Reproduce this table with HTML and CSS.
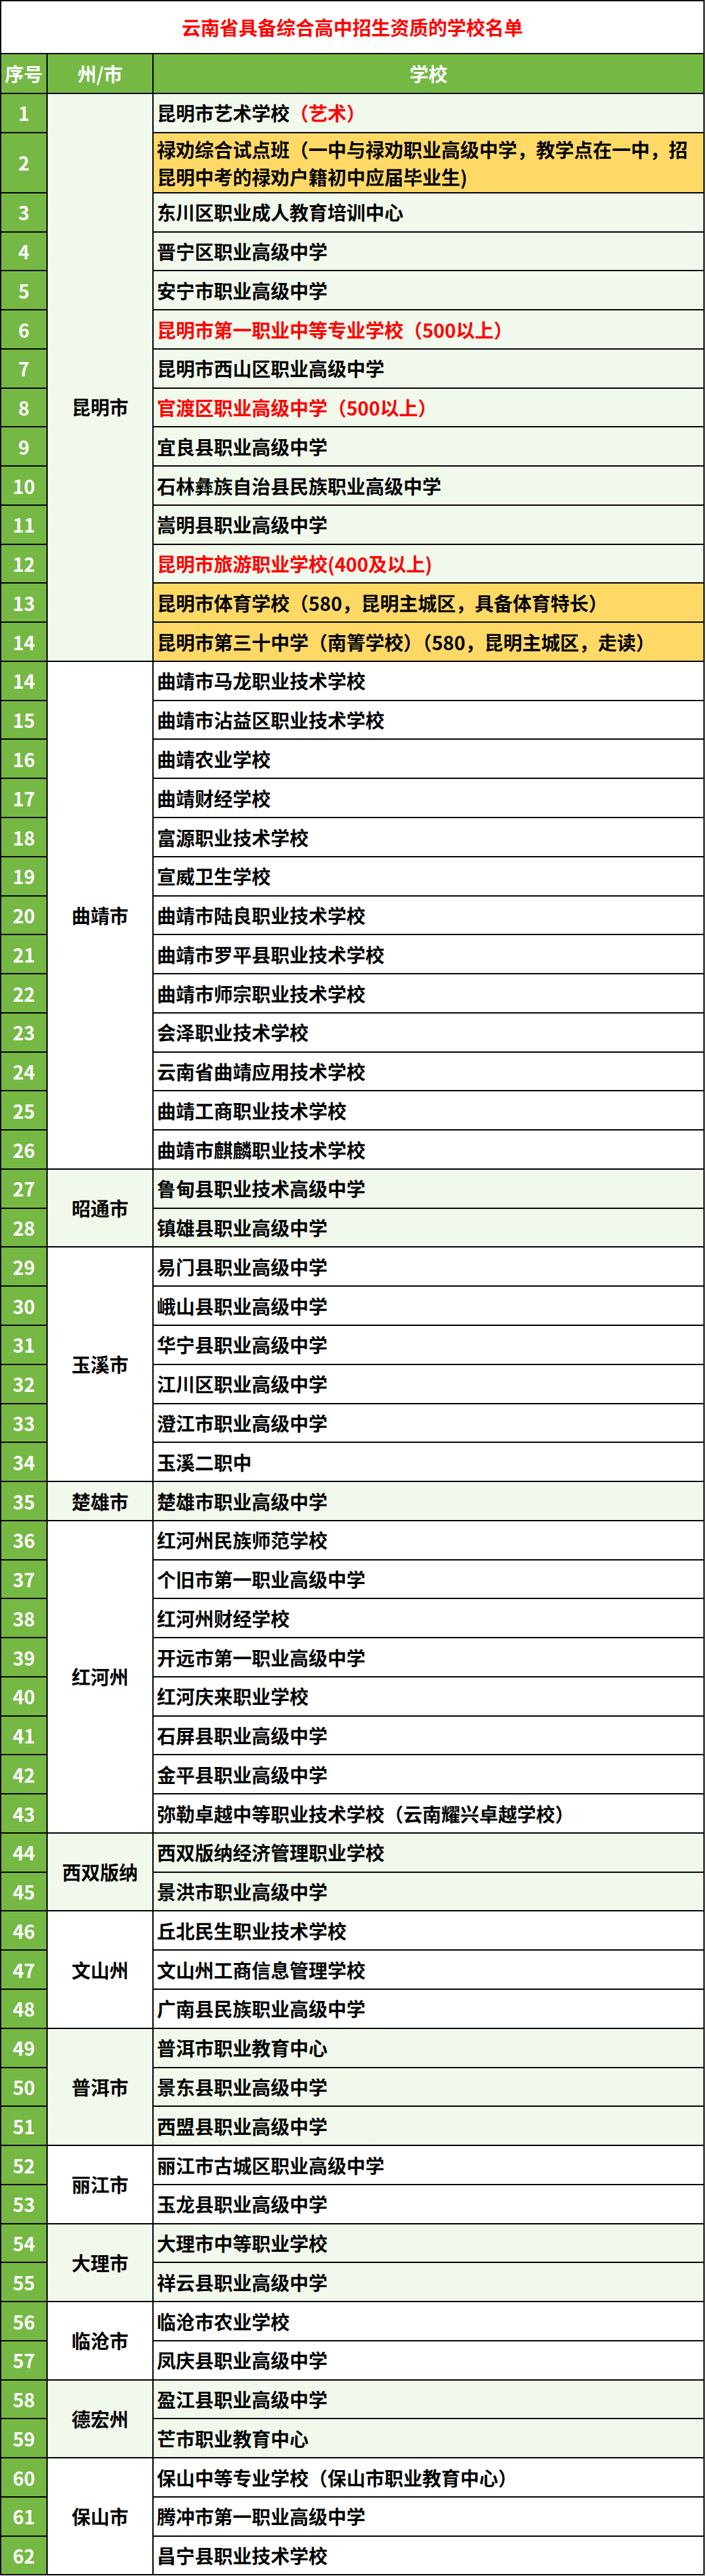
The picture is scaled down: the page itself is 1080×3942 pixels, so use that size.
FILE: index.html
```html
<!DOCTYPE html>
<html lang="zh-CN">
<head>
<meta charset="utf-8">
<title>云南省具备综合高中招生资质的学校名单</title>
<link rel="stylesheet" href="styles.css">
</head>
<body>
<div class="sheet">
  <div class="title">云南省具备综合高中招生资质的学校名单</div>
  <div class="head">序号</div><div class="head">州/市</div><div class="head">学校</div>

  <div class="seq">1</div><div class="city tint span14 low">昆明市</div><div class="school tint">昆明市艺术学校<span class="red">（艺术）</span></div>
  <div class="seq">2</div><div class="school gold two">禄劝综合试点班（一中与禄劝职业高级中学，教学点在一中，招<br>昆明中考的禄劝户籍初中应届毕业生)</div>
  <div class="seq">3</div><div class="school tint">东川区职业成人教育培训中心</div>
  <div class="seq">4</div><div class="school tint">晋宁区职业高级中学</div>
  <div class="seq">5</div><div class="school tint">安宁市职业高级中学</div>
  <div class="seq">6</div><div class="school tint red">昆明市第一职业中等专业学校（500以上）</div>
  <div class="seq">7</div><div class="school tint">昆明市西山区职业高级中学</div>
  <div class="seq">8</div><div class="school tint red">官渡区职业高级中学（500以上）</div>
  <div class="seq">9</div><div class="school tint">宜良县职业高级中学</div>
  <div class="seq">10</div><div class="school tint">石林彝族自治县民族职业高级中学</div>
  <div class="seq">11</div><div class="school tint">嵩明县职业高级中学</div>
  <div class="seq">12</div><div class="school tint red">昆明市旅游职业学校(400及以上)</div>
  <div class="seq">13</div><div class="school gold">昆明市体育学校（580，昆明主城区，具备体育特长）</div>
  <div class="seq">14</div><div class="school gold">昆明市第三十中学（南箐学校）（580，昆明主城区，走读）</div>

  <div class="seq">14</div><div class="city span13">曲靖市</div><div class="school">曲靖市马龙职业技术学校</div>
  <div class="seq">15</div><div class="school">曲靖市沾益区职业技术学校</div>
  <div class="seq">16</div><div class="school">曲靖农业学校</div>
  <div class="seq">17</div><div class="school">曲靖财经学校</div>
  <div class="seq">18</div><div class="school">富源职业技术学校</div>
  <div class="seq">19</div><div class="school">宣威卫生学校</div>
  <div class="seq">20</div><div class="school">曲靖市陆良职业技术学校</div>
  <div class="seq">21</div><div class="school">曲靖市罗平县职业技术学校</div>
  <div class="seq">22</div><div class="school">曲靖市师宗职业技术学校</div>
  <div class="seq">23</div><div class="school">会泽职业技术学校</div>
  <div class="seq">24</div><div class="school">云南省曲靖应用技术学校</div>
  <div class="seq">25</div><div class="school">曲靖工商职业技术学校</div>
  <div class="seq">26</div><div class="school">曲靖市麒麟职业技术学校</div>

  <div class="seq">27</div><div class="city tint span2">昭通市</div><div class="school tint">鲁甸县职业技术高级中学</div>
  <div class="seq">28</div><div class="school tint">镇雄县职业高级中学</div>

  <div class="seq">29</div><div class="city span6">玉溪市</div><div class="school">易门县职业高级中学</div>
  <div class="seq">30</div><div class="school">峨山县职业高级中学</div>
  <div class="seq">31</div><div class="school">华宁县职业高级中学</div>
  <div class="seq">32</div><div class="school">江川区职业高级中学</div>
  <div class="seq">33</div><div class="school">澄江市职业高级中学</div>
  <div class="seq">34</div><div class="school">玉溪二职中</div>

  <div class="seq">35</div><div class="city tint">楚雄市</div><div class="school tint">楚雄市职业高级中学</div>

  <div class="seq">36</div><div class="city span8">红河州</div><div class="school">红河州民族师范学校</div>
  <div class="seq">37</div><div class="school">个旧市第一职业高级中学</div>
  <div class="seq">38</div><div class="school">红河州财经学校</div>
  <div class="seq">39</div><div class="school">开远市第一职业高级中学</div>
  <div class="seq">40</div><div class="school">红河庆来职业学校</div>
  <div class="seq">41</div><div class="school">石屏县职业高级中学</div>
  <div class="seq">42</div><div class="school">金平县职业高级中学</div>
  <div class="seq">43</div><div class="school">弥勒卓越中等职业技术学校（云南耀兴卓越学校）</div>

  <div class="seq">44</div><div class="city tint span2">西双版纳</div><div class="school tint">西双版纳经济管理职业学校</div>
  <div class="seq">45</div><div class="school tint">景洪市职业高级中学</div>

  <div class="seq">46</div><div class="city span3">文山州</div><div class="school">丘北民生职业技术学校</div>
  <div class="seq">47</div><div class="school">文山州工商信息管理学校</div>
  <div class="seq">48</div><div class="school">广南县民族职业高级中学</div>

  <div class="seq">49</div><div class="city tint span3">普洱市</div><div class="school tint">普洱市职业教育中心</div>
  <div class="seq">50</div><div class="school tint">景东县职业高级中学</div>
  <div class="seq">51</div><div class="school tint">西盟县职业高级中学</div>

  <div class="seq">52</div><div class="city span2">丽江市</div><div class="school">丽江市古城区职业高级中学</div>
  <div class="seq">53</div><div class="school">玉龙县职业高级中学</div>

  <div class="seq">54</div><div class="city tint span2">大理市</div><div class="school tint">大理市中等职业学校</div>
  <div class="seq">55</div><div class="school tint">祥云县职业高级中学</div>

  <div class="seq">56</div><div class="city span2">临沧市</div><div class="school">临沧市农业学校</div>
  <div class="seq">57</div><div class="school">凤庆县职业高级中学</div>

  <div class="seq">58</div><div class="city tint span2">德宏州</div><div class="school tint">盈江县职业高级中学</div>
  <div class="seq">59</div><div class="school tint">芒市职业教育中心</div>

  <div class="seq">60</div><div class="city span3">保山市</div><div class="school">保山中等专业学校（保山市职业教育中心）</div>
  <div class="seq">61</div><div class="school">腾冲市第一职业高级中学</div>
  <div class="seq">62</div><div class="school">昌宁县职业技术学校</div>
</div>
</body>
</html>
```
FILE: styles.css
```css
html, body {
  margin: 0;
  padding: 0;
  background: #ffffff;
}

.sheet {
  width: 1078px;
  box-sizing: border-box;
  display: grid;
  grid-template-columns: 69px 160px 1fr;
  grid-template-rows: 79px 59px 57.77px 90px;
  grid-auto-rows: 57.77px;
  gap: 2px;
  padding: 2px;
  background: #000000;
  font-family: "Noto Sans CJK SC", "Noto Sans", sans-serif;
  font-weight: 700;
  font-size: 29px;
  color: #000000;
}

.sheet > div {
  display: flex;
  align-items: center;
  line-height: 1.2;
  white-space: nowrap;
}

.title {
  grid-column: 1 / -1;
  justify-content: center;
  background: #ffffff;
  color: #ff0000;
}

.head {
  justify-content: center;
  background: #75b844;
  color: #ffffff;
}

.seq {
  grid-column: 1;
  justify-content: center;
  background: #75b844;
  color: #ffffff;
}

.city {
  grid-column: 2;
  justify-content: center;
  background: #ffffff;
}

.city.low {
  padding-top: 90px;
  box-sizing: border-box;
}

.school {
  grid-column: 3;
  padding-left: 5px;
  background: #ffffff;
}

.tint {
  background: #f1f8ec;
}

.gold {
  background: #ffd966;
}

.two {
  line-height: 42px !important;
  white-space: normal !important;
}

.red {
  color: #ff0000;
}

.span2 { grid-row: span 2; }
.span3 { grid-row: span 3; }
.span6 { grid-row: span 6; }
.span8 { grid-row: span 8; }
.span13 { grid-row: span 13; }
.span14 { grid-row: span 14; }
```
